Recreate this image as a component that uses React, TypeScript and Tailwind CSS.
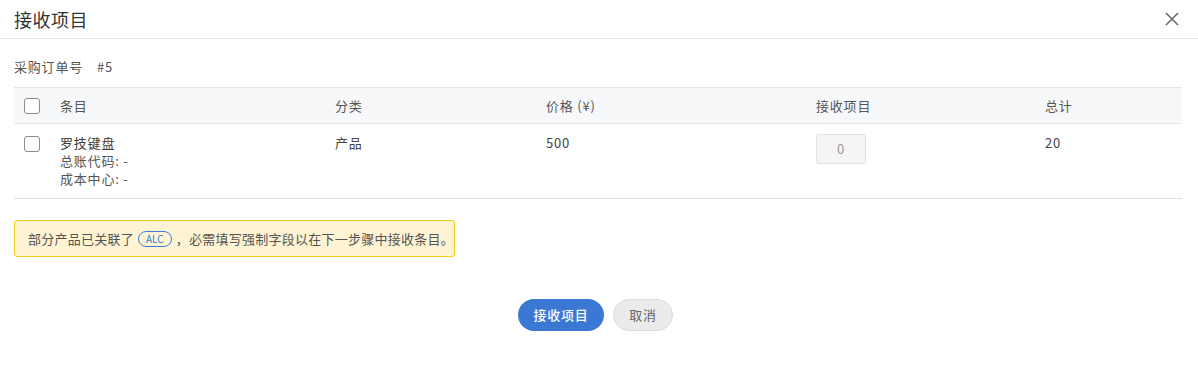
/**
 * Receive Items Dialog
 * Modal content for receiving items against a purchase order.
 */

const font = "font-['Noto_Sans_CJK_SC','Noto_Sans',sans-serif]";

function Checkbox() {
  return (
    <span className="block h-4 w-4 rounded-[3px] border border-[#8a8a8a] bg-white" />
  );
}

export default function App() {
  return (
    <div className={`${font} h-[371px] w-[1198px] bg-white text-[13px] text-[#444]`}>
      {/* Header */}
      <div className="flex h-[39px] items-center justify-between border-b border-[#e6e6e6] pl-[14px] pr-[18px]">
        <h1 className="text-[18px] leading-none tracking-[0.5px] text-[#333]">接收项目</h1>
        <svg width="16" height="16" viewBox="0 0 16 16" className="text-[#666]">
          <path d="M2 2L14 14M14 2L2 14" stroke="currentColor" strokeWidth="1.5" />
        </svg>
      </div>

      <div className="pl-[14px] pr-[16px] tracking-[0.8px]">
        {/* PO number */}
        <div className="mt-[18px] flex h-5 items-center gap-[14px] text-[#555]">
          <span>采购订单号</span>
          <span>#5</span>
        </div>

        {/* Table */}
        <div className="mt-[10px]">
          <div className="grid h-[37px] grid-cols-[46px_275px_211px_270px_229px_1fr] items-center border-y border-[#e6e6e6] bg-[#f7f8fa] text-[#555]">
            <div className="pl-[10px]">
              <Checkbox />
            </div>
            <div>条目</div>
            <div>分类</div>
            <div>价格 (¥)</div>
            <div>接收项目</div>
            <div>总计</div>
          </div>
          <div className="grid grid-cols-[46px_275px_211px_270px_229px_1fr] border-b border-[#dcdcdc] pb-[10px] pt-[10px] leading-[18px]">
            <div className="pl-[10px] pt-[2px]">
              <Checkbox />
            </div>
            <div>
              <div className="text-[#3a3a3a]">罗技键盘</div>
              <div className="text-[#555]">总账代码: -</div>
              <div className="text-[#555]">成本中心: -</div>
            </div>
            <div>产品</div>
            <div>500</div>
            <div>
              <div className="flex h-[30px] w-[50px] items-center justify-center rounded-[3px] border border-[#e2e2e2] bg-[#f5f5f5] text-[#999]">
                0
              </div>
            </div>
            <div>20</div>
          </div>
        </div>

        {/* Notice */}
        <div className="mt-[21px] flex h-[37px] w-[441px] items-center rounded-[3px] border border-[#f2cc16] bg-[#fef3d2] pl-[13px] tracking-[0.25px] text-[#555]">
          部分产品已关联了
          <span className="mx-[4px] rounded-full border border-[#3b7ddd] px-[7px] text-[10px] leading-[14px] tracking-normal text-[#3b7ddd]">
            ALC
          </span>
          ，必需填写强制字段以在下一步骤中接收条目。
        </div>
      </div>

      {/* Actions */}
      <div className="mt-[42px] flex justify-center gap-[9px] pr-[7px]">
        <button className="h-[32px] w-[86px] rounded-full bg-[#3a78d4] text-[13px] font-medium tracking-[0.8px] text-white">
          接收项目
        </button>
        <button className="h-[32px] w-[60px] rounded-full border border-[#dadada] bg-[#ebebeb] text-[13px] tracking-[0.8px] text-[#666]">
          取消
        </button>
      </div>
    </div>
  );
}
